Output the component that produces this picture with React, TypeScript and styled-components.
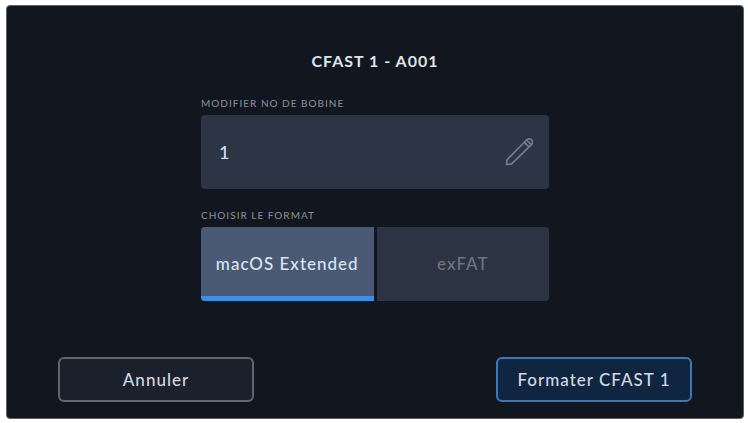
import React, { useState } from "react";
import styled, { createGlobalStyle } from "styled-components";

const GlobalStyle = createGlobalStyle`
  *, *::before, *::after { box-sizing: border-box; }
  body {
    margin: 0;
    background: #fff;
    font-family: Lato, "Open Sans", sans-serif;
  }
  button, input { font: inherit; color: inherit; }
`;

const Page = styled.main`
  padding: 5px 4px 4px 6px;
`;

const Dialog = styled.section`
  display: flex;
  flex-direction: column;
  align-items: center;
  padding: 45px 51px 16px;
  border: 1px solid #5d6166;
  border-radius: 4px;
  background: #12161f;
  color: #dfe4ee;
`;

const Title = styled.h1`
  margin: 0 0 26px;
  font-size: 16px;
  line-height: 20px;
  font-weight: 700;
  letter-spacing: 1px;
`;

const Form = styled.form`
  width: 100%;
  max-width: 348px;
  display: flex;
  flex-direction: column;
  gap: 20px;
`;

const Field = styled.div`
  display: flex;
  flex-direction: column;
  gap: 6px;
`;

const Caption = styled.label`
  font-size: 10px;
  line-height: 12px;
  font-weight: 500;
  letter-spacing: 1px;
  text-transform: uppercase;
  color: #858a96;
`;

const ReelBox = styled.div`
  display: flex;
  align-items: center;
  height: 74px;
  padding: 0 15px 0 18px;
  border-radius: 4px;
  background: #2c3546;
  color: #737c8d;
`;

const ReelInput = styled.input`
  flex: 1;
  min-width: 0;
  padding: 0;
  border: 0;
  outline: 0;
  background: transparent;
  color: #d7deea;
  font-size: 18px;
  line-height: 24px;
  font-weight: 500;
`;

const Segments = styled.div`
  display: grid;
  grid-template-columns: 1fr 1fr;
  gap: 3px;
  border-radius: 4px;
  overflow: hidden;
`;

const Segment = styled.button<{ $active: boolean }>`
  height: 74px;
  padding: 5px 0 0;
  border: 0;
  border-bottom: 5px solid ${(p) => (p.$active ? "#3f8ee0" : "#2c3443")};
  background: ${(p) => (p.$active ? "#4a5a75" : "#2c3443")};
  color: ${(p) => (p.$active ? "#dde4ef" : "#6d7482")};
  font-size: 17px;
  line-height: 24px;
  font-weight: 500;
  letter-spacing: 1px;
  cursor: pointer;
`;

const Footer = styled.footer`
  align-self: stretch;
  display: flex;
  justify-content: space-between;
  gap: 16px;
  margin-top: 56px;
`;

const Action = styled.button<{ $primary?: boolean }>`
  flex: 0 1 196px;
  height: 45px;
  padding: 0;
  border: 2px solid ${(p) => (p.$primary ? "#3f77b5" : "#62676f")};
  border-radius: 6px;
  background: ${(p) => (p.$primary ? "#10253f" : "#1a212c")};
  color: #d3d9e4;
  font-size: 17px;
  line-height: 24px;
  font-weight: 500;
  letter-spacing: 1px;
  cursor: pointer;
`;

function PencilIcon() {
  return (
    <svg
      width="30"
      height="30"
      viewBox="0 0 30 30"
      fill="none"
      stroke="currentColor"
      strokeWidth="1.7"
      strokeLinejoin="round"
      strokeLinecap="round"
      aria-hidden="true"
    >
      <path d="M2.500 27.500 L3 22.800 L22.600 3 Q25.300 0.900 27.600 2.900 Q29.400 5.200 27.400 7.600 L7.600 26.800 Z" />
      <path d="M20.400 5.400 L25.100 10" />
      <path d="M22.600 3.200 L27.200 7.700" />
    </svg>
  );
}

const FORMATS = ["macOS Extended", "exFAT"];

export default function App() {
  const [reel, setReel] = useState("1");
  const [format, setFormat] = useState(FORMATS[0]);

  return (
    <>
      <GlobalStyle />
      <Page>
        <Dialog aria-labelledby="title">
          <Title id="title">CFAST 1 - A001</Title>
          <Form id="format-form" onSubmit={(e) => e.preventDefault()}>
            <Field>
              <Caption htmlFor="reel">Modifier no de bobine</Caption>
              <ReelBox>
                <ReelInput id="reel" value={reel} onChange={(e) => setReel(e.target.value)} />
                <PencilIcon />
              </ReelBox>
            </Field>
            <Field>
              <Caption as="span" id="format-label">Choisir le format</Caption>
              <Segments role="group" aria-labelledby="format-label">
                {FORMATS.map((name) => (
                  <Segment
                    key={name}
                    type="button"
                    $active={name === format}
                    aria-pressed={name === format}
                    onClick={() => setFormat(name)}
                  >
                    {name}
                  </Segment>
                ))}
              </Segments>
            </Field>
          </Form>
          <Footer>
            <Action type="button">Annuler</Action>
            <Action type="submit" form="format-form" $primary>Formater CFAST 1</Action>
          </Footer>
        </Dialog>
      </Page>
    </>
  );
}
